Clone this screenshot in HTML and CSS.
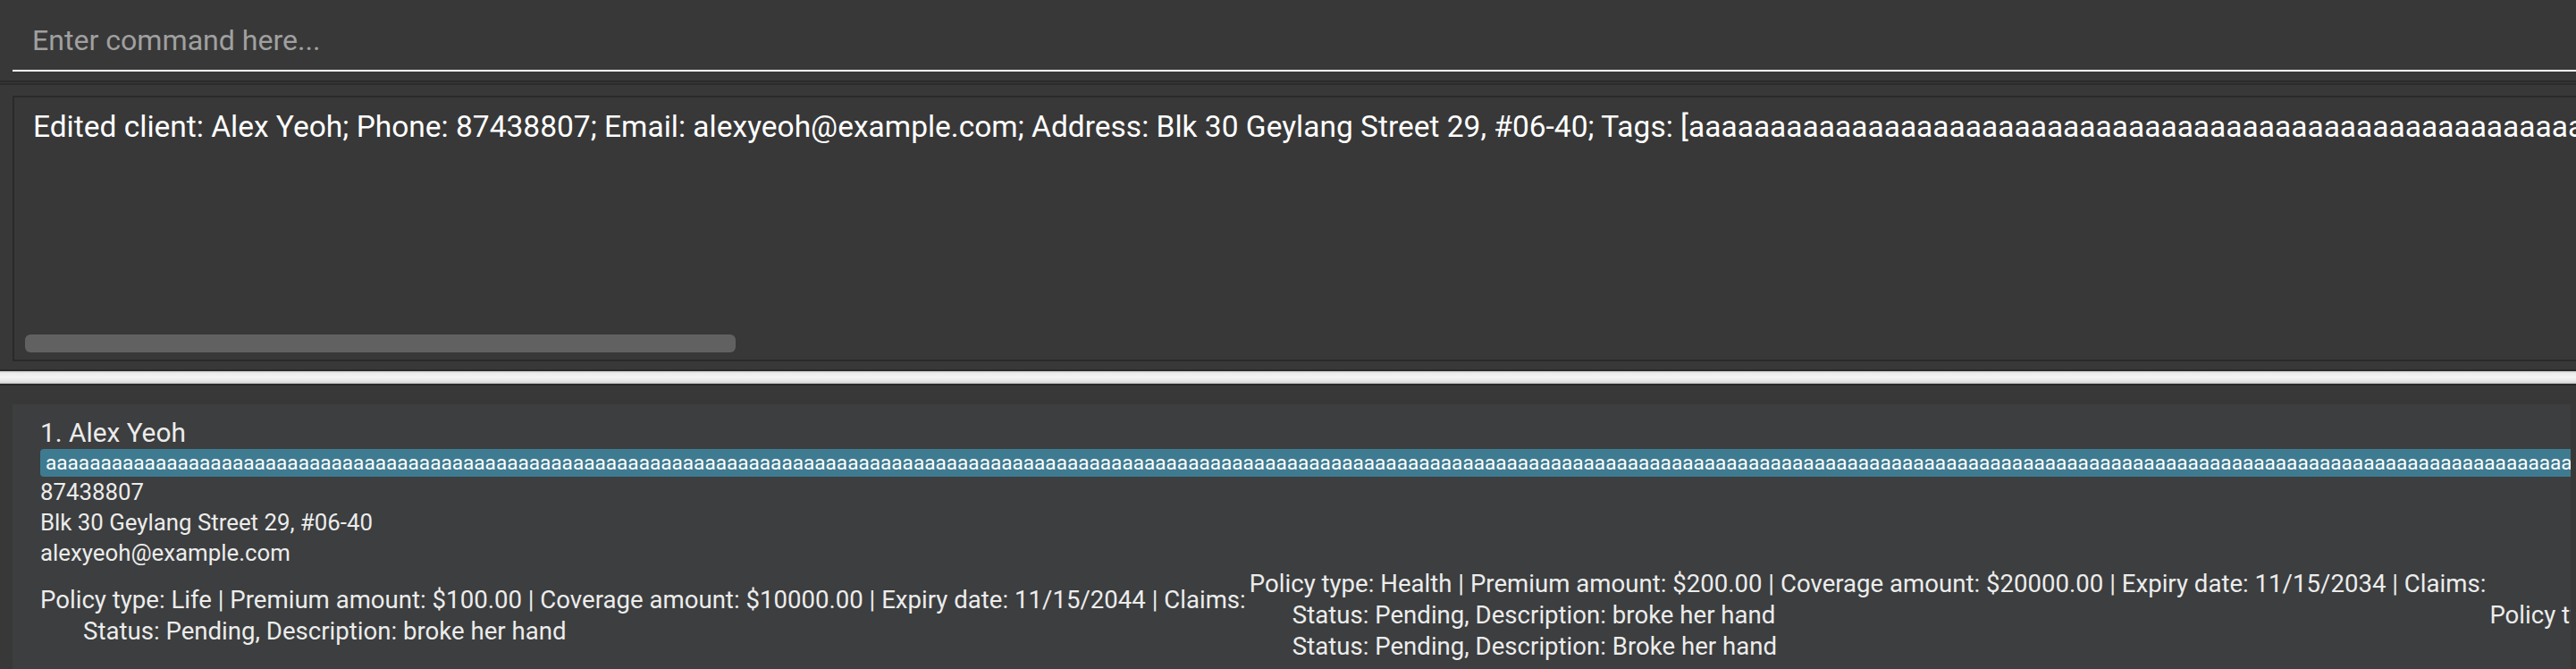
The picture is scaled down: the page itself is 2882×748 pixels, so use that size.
FILE: index.html
```html
<!DOCTYPE html>
<html>
<head>
<meta charset="utf-8">
<link rel="stylesheet" href="styles.css">
</head>
<body>
<div class="app">
  <div class="command-box">
    <div class="command-input">Enter command here...</div>
  </div>
  <div class="pane-divider"></div>
  <div class="result-pane">
    <div class="result-box">
      <div class="result-text">Edited client: Alex Yeoh; Phone: 87438807; Email: alexyeoh@example.com; Address: Blk 30 Geylang Street 29, #06-40; Tags: [aaaaaaaaaaaaaaaaaaaaaaaaaaaaaaaaaaaaaaaaaaaaaaaaaaaaaaaaaaaaaaaaaaaaaaaaaaaaaaaaaaaaaaaaaaaaaaaaaaaaaaaaaaaaaaaaaaaaaaaaaaaaaaaaaaaaaaaaaaaaaaaaaaaaaaaaaaaaaaaaaaaaaaaaaaaaaaaaaaaaaa]</div>
      <div class="hscroll"><div class="hthumb"></div></div>
    </div>
  </div>
  <div class="split-divider"></div>
  <div class="list-pane">
    <div class="card">
      <div class="name">1. Alex Yeoh</div>
      <div class="tags"><span class="tag">aaaaaaaaaaaaaaaaaaaaaaaaaaaaaaaaaaaaaaaaaaaaaaaaaaaaaaaaaaaaaaaaaaaaaaaaaaaaaaaaaaaaaaaaaaaaaaaaaaaaaaaaaaaaaaaaaaaaaaaaaaaaaaaaaaaaaaaaaaaaaaaaaaaaaaaaaaaaaaaaaaaaaaaaaaaaaaaaaaaaaaaaaaaaaaaaaaaaaaaaaaaaaaaaaaaaaaaaaaaaaaaaaaaaaaaaaaaaaaaaa</span></div>
      <div class="field">87438807</div>
      <div class="field">Blk 30 Geylang Street 29, #06-40</div>
      <div class="field">alexyeoh@example.com</div>
      <div class="policies">
        <div class="policy">
          <div class="policy-head">Policy type: Life | Premium amount: $100.00 | Coverage amount: $10000.00 | Expiry date: 11/15/2044 | Claims:</div>
          <div class="claim">Status: Pending, Description: broke her hand</div>
        </div>
        <div class="policy">
          <div class="policy-head">Policy type: Health | Premium amount: $200.00 | Coverage amount: $20000.00 | Expiry date: 11/15/2034 | Claims:</div>
          <div class="claim">Status: Pending, Description: broke her hand</div>
          <div class="claim">Status: Pending, Description: Broke her hand</div>
        </div>
        <div class="policy">
          <div class="policy-head">Policy type: Education | Premium amount: $300.00 | Coverage amount: $30000.00 | Expiry date: 11/15/2054 | Claims:</div>
        </div>
      </div>
    </div>
  </div>
</div>
</body>
</html>
```

FILE: styles.css
```css
html, body {
  margin: 0;
  padding: 0;
  background: #383838;
  font-family: "Roboto", "Liberation Sans", sans-serif;
}

.app {
  width: 100%;
  height: 748px;
  overflow: hidden;
  display: flex;
  flex-direction: column;
  background: #383838;
}

.command-box {
  height: 80px;
  padding-left: 14px;
}

.command-input {
  box-sizing: border-box;
  height: 80px;
  padding: 24px 0 0 22px;
  font-size: 32.1px;
  line-height: 42px;
  color: #a0a0a0;
  border-bottom: 2px solid #ffffff;
  white-space: nowrap;
}

.pane-divider {
  margin-top: 10px;
  height: 1px;
  border-top: 2px solid #2b2b2b;
  border-bottom: 2px solid #2b2b2b;
}

.result-pane {
  padding: 12px 0 9px 14px;
}

.result-box {
  box-sizing: border-box;
  height: 297px;
  margin-right: -20px;
  border: 2px solid #2a2a2a;
  display: flex;
  flex-direction: column;
  justify-content: space-between;
  overflow: hidden;
}

.result-text {
  padding: 12px 0 0 21px;
  font-size: 33.5px;
  line-height: 42px;
  color: #ffffff;
  white-space: nowrap;
}

.hscroll {
  padding: 0 0 8px 12px;
}

.hthumb {
  width: 795px;
  height: 20px;
  border-radius: 6px;
  background: #616161;
}

.split-divider {
  height: 14px;
  border-top: 2px solid #2a2a2a;
  border-bottom: 2px solid #2a2a2a;
  background: linear-gradient(#c2c2c2 0%, #ececec 14%, #f4f4f4 50%, #e4e4e4 82%, #c6c6c6 100%);
}

.list-pane {
  flex: 1;
  display: flex;
  padding: 21px 6px 0 14px;
  min-height: 0;
}

.card {
  flex: 1;
  min-width: 0;
  background: #3c3e3f;
  padding: 13px 0 0 31px;
  overflow: hidden;
  color: #ececec;
}

.name {
  font-size: 29.8px;
  line-height: 37px;
  white-space: nowrap;
}

.tags {
  display: flex;
  white-space: nowrap;
}

.tag {
  display: block;
  font-size: 22.6px;
  line-height: 31px;
  padding: 0 6px;
  border-radius: 4px;
  background: #3e7b91;
  color: #ffffff;
}

.field {
  font-size: 25.8px;
  line-height: 34px;
  white-space: nowrap;
}

.policies {
  display: flex;
  align-items: center;
  gap: 2px;
  white-space: nowrap;
}

.policy {
  flex: none;
  font-size: 27.6px;
  line-height: 35px;
}

.policy-head {
  padding-right: 2px;
}

.claim {
  padding-left: 48px;
}
```
